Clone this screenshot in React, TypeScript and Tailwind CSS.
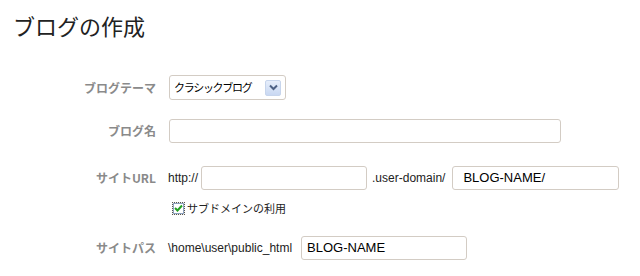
import React from "react";

const jp = "font-['Noto_Sans_CJK_JP',sans-serif]";
const latin = "font-['Liberation_Sans','Noto_Sans_CJK_JP',sans-serif]";

function Label({ children }: { children: React.ReactNode }) {
  return (
    <div className={`w-[156px] shrink-0 text-right text-[12px] font-bold text-[#8a8a8a] ${jp}`}>
      {children}
    </div>
  );
}

function TextInput({ width, value = "", pad = "pl-[5px]" }: { width: string; value?: string; pad?: string }) {
  return (
    <div
      className={`${width} h-[24px] rounded-[3px] border border-[#d3ccc4] bg-white flex items-center ${pad} text-[13px] text-black ${latin}`}
    >
      {value}
    </div>
  );
}

export default function App() {
  return (
    <div className="w-[640px] h-[276px] bg-white overflow-hidden">
      {/* Title */}
      <h1 className={`pl-[13px] pt-[10px] text-[22px] leading-[30px] text-[#222] ${jp}`}>
        ブログの作成
      </h1>

      {/* Blog theme */}
      <div className="mt-[35px] flex items-center">
        <Label>ブログテーマ</Label>
        <div className="ml-[13px] w-[117px] h-[25px] rounded-[3px] border border-[#d3ccc4] bg-white flex items-center justify-between pl-[4px] pr-[4px]">
          <span className={`text-[11px] tracking-[-1.3px] text-black ${jp}`}>クラシックブログ</span>
          <div className="w-[16px] h-[16px] rounded-[2px] border border-[#c7d5ec] bg-gradient-to-b from-[#e6eefb] to-[#c9d8f2] flex items-center justify-center">
            <svg width="9" height="7" viewBox="0 0 9 7">
              <path d="M1 1.5 L4.5 5 L8 1.5" fill="none" stroke="#4d6185" strokeWidth="2" />
            </svg>
          </div>
        </div>
      </div>

      {/* Blog name */}
      <div className="mt-[19px] flex items-center">
        <Label>ブログ名</Label>
        <div className="ml-[13px]">
          <TextInput width="w-[392px]" />
        </div>
      </div>

      {/* Site URL */}
      <div className="mt-[23px] flex items-center">
        <Label>サイトURL</Label>
        <span className={`ml-[12px] text-[12px] text-[#222] ${latin}`}>http://</span>
        <div className="ml-[3px]">
          <TextInput width="w-[166px]" />
        </div>
        <span className={`ml-[5px] text-[12px] text-[#222] ${latin}`}>.user-domain/</span>
        <div className="ml-[7px]">
          <TextInput width="w-[167px]" value="BLOG-NAME/" pad="pl-[10px]" />
        </div>
      </div>

      {/* Subdomain checkbox */}
      <div className="mt-[10px] flex items-center pl-[172px]">
        <div className="w-[13px] h-[13px] border border-dotted border-[#555] bg-[#f4f0e6] flex items-center justify-center">
          <div className="w-[11px] h-[11px] border border-[#8fa3c0] bg-white flex items-center justify-center">
            <svg width="9" height="8" viewBox="0 0 9 8">
              <path d="M1 4 L3.5 6.5 L8 1.5" fill="none" stroke="#21a121" strokeWidth="2" />
            </svg>
          </div>
        </div>
        <span className={`ml-[2px] text-[11px] text-[#222] ${jp}`}>サブドメインの利用</span>
      </div>

      {/* Site path */}
      <div className="mt-[19px] flex items-center">
        <Label>サイトパス</Label>
        <span className={`ml-[12px] text-[12px] text-[#222] ${latin}`}>\home\user\public_html</span>
        <div className="ml-[9px]">
          <TextInput width="w-[166px]" value="BLOG-NAME" />
        </div>
      </div>
    </div>
  );
}
